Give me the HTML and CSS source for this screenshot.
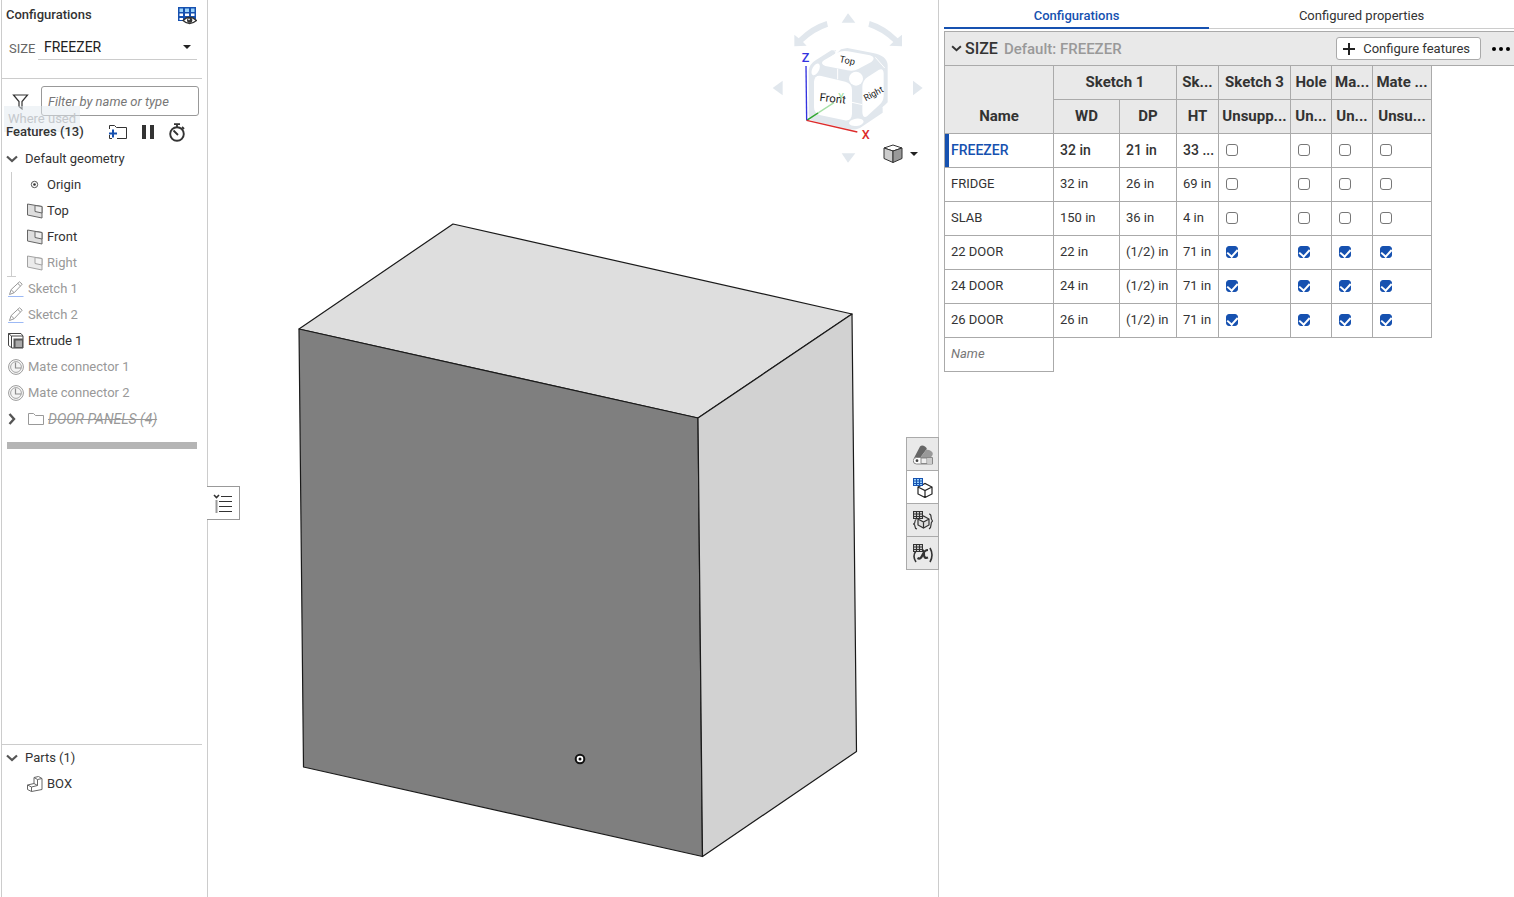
FILE: index.html
```html
<!DOCTYPE html>
<html lang="en">
<head>
<meta charset="UTF-8" />
<meta name="viewport" content="width=device-width, initial-scale=1" />
<title>FREEZER - Part Studio</title>
<link rel="stylesheet" href="styles.css">
</head>
<body>
<svg class="sprite" aria-hidden="true">
  <symbol id="chevron-down" viewBox="0 0 12 8"><path d="M1 1.500l5 4.500 5-4.500" fill="none" stroke="currentColor" stroke-width="2.200"/></symbol>
  <symbol id="chevron-right" viewBox="0 0 8 12"><path d="M1.500 1l4.500 5-4.500 5" fill="none" stroke="currentColor" stroke-width="2.400"/></symbol>
  <symbol id="caret" viewBox="0 0 8 4"><path d="M0 0h8L4 4z" fill="#222"/></symbol>
  <symbol id="plane" viewBox="0 0 16 16"><path d="M.5 1l14.500 2.500v11.500L.5 12z" fill="#dedede" stroke="#666"/><path d="M8 2.500v6l7 1.500V3.500z" fill="#eee" stroke="#666"/></symbol>
  <symbol id="sketch" viewBox="0 0 16 16"><path d="M1.500 13.500l1.700-5L11.500 .8l2.700 2.400-8 8.500z" fill="#fff" stroke="#555"/><path d="M3.200 8.800l2.800 2.800M9.800 2.500l2.700 2.500" stroke="#555"/><path d="M0 15.500h15.500" stroke="#5c8cf0"/></symbol>
  <symbol id="mate" viewBox="0 0 16 16"><circle cx="8" cy="8" r="7.400" fill="#fff" stroke="#555"/><circle cx="8" cy="8" r="5.400" fill="#eee" stroke="#666"/><path d="M7.500 3.500V9H13" fill="none" stroke="#444" stroke-width="1.200"/></symbol>
  <symbol id="grid" viewBox="0 0 10 8"><rect width="10" height="8" fill="#333"/><path d="M1 1h2v1.500H1zM4 1h2v1.500H4zM7 1h2v1.500H7zM1 3.500h2V5H1zM4 3.500h2V5H4zM7 3.500h2V5H7zM1 6h2v1H1zM4 6h2v1H4zM7 6h2v1H7z" fill="#ccc"/></symbol>
</svg>

<div class="app">
  <aside class="sidebar">
    <section class="config">
      <header class="config-head">
        <h2>Configurations</h2>
        <button class="icon-btn" aria-label="Show configuration table">
          <svg width="19" height="18" viewBox="0 0 19 18"><path d="M0 0h18v14H0z" fill="#1651b0"/><path d="M1.500 1.500H5V5H1.500zM7 1.500h4V5H7zM13 1.500h3.500V5H13z" fill="#9bd3fa"/><path d="M1.500 6.500H5V9H1.500zM7 6.500h4V9H7zM13 6.500h3.500V9H13zM1.500 11H5v2H1.500z" fill="#fff"/><path d="M5 13.500q6.500-6.500 13.500 0-7 6-13.500 0z" fill="#fff" stroke="#333" stroke-width="1.300"/><circle cx="11.700" cy="13.200" r="2.600" fill="#333"/><circle cx="11" cy="12.400" r=".8" fill="#fff"/></svg>
        </button>
      </header>
      <div class="config-row">
        <label for="size">SIZE</label>
        <div class="select">
          <select id="size">
            <option>FREEZER</option>
            <option>FRIDGE</option>
            <option>SLAB</option>
            <option>22 DOOR</option>
            <option>24 DOOR</option>
            <option>26 DOOR</option>
          </select>
          <svg width="8" height="4"><use href="#caret"/></svg>
        </div>
      </div>
    </section>

    <section class="features">
      <div class="filter">
        <button class="icon-btn" aria-label="Filter">
          <svg width="17" height="17" viewBox="0 0 17 17"><path d="M1.500 2h14L10 8.500V16l-3-2.500v-5z" fill="none" stroke="#333" stroke-width="1.200"/></svg>
        </button>
        <input type="text" placeholder="Filter by name or type" aria-label="Filter by name or type">
        <span class="tooltip">Where used</span>
      </div>
      <header class="features-head">
        <h2>Features (13)</h2>
        <div class="tools">
          <button class="icon-btn" aria-label="Add folder">
            <svg width="20" height="16" viewBox="0 0 20 16"><path d="M1.500 5V1.500h5l2 2h10v11H9M1.500 11v3.500H4" fill="none" stroke="#333"/><path d="M1 9.500h8M5 5.500v8" stroke="#1651b0" stroke-width="2"/></svg>
          </button>
          <button class="icon-btn" aria-label="Pause">
            <svg width="12" height="14"><path d="M0 0h4v14H0zM8 0h4v14H8z" fill="#333"/></svg>
          </button>
          <button class="icon-btn" aria-label="Regeneration times">
            <svg width="18" height="19" viewBox="0 0 18 19"><circle cx="9" cy="11" r="6.800" fill="none" stroke="#333" stroke-width="1.900"/><path d="M6 1.200h6M9 1v3M14 4l2 2M5.500 7.500L10 12" fill="none" stroke="#333" stroke-width="1.800"/></svg>
          </button>
        </div>
      </header>
      <ul class="tree">
        <li class="row"><svg class="chev" width="12" height="8"><use href="#chevron-down"/></svg>Default geometry</li>
        <li>
          <ul class="group">
            <li class="row"><svg width="16" height="16" viewBox="0 0 16 16"><circle cx="7.500" cy="7.500" r="3.200" fill="none" stroke="#555"/><circle cx="7.500" cy="7.500" r="1.300" fill="#333"/></svg>Origin</li>
            <li class="row"><svg width="16" height="16"><use href="#plane"/></svg>Top</li>
            <li class="row"><svg width="16" height="16"><use href="#plane"/></svg>Front</li>
            <li class="row hidden-item"><svg width="16" height="16"><use href="#plane"/></svg>Right</li>
          </ul>
        </li>
        <li class="row hidden-item"><svg width="16" height="16"><use href="#sketch"/></svg>Sketch 1</li>
        <li class="row hidden-item"><svg width="16" height="16"><use href="#sketch"/></svg>Sketch 2</li>
        <li class="row"><svg width="16" height="16" viewBox="0 0 16 16"><path d="M.5 .5h12.500l2 2.500v12H4L.5 12.500z" fill="#fff" stroke="#444"/><path d="M3.500 15V3H15M.5 .5l3 2.500" fill="none" stroke="#444"/><path d="M5.500 5.500H15V15H5.500z" fill="#555"/><path d="M7.500 7.500H14V14H7.500z" fill="#aaa"/></svg>Extrude 1</li>
        <li class="row hidden-item"><svg width="16" height="16"><use href="#mate"/></svg>Mate connector 1</li>
        <li class="row hidden-item"><svg width="16" height="16"><use href="#mate"/></svg>Mate connector 2</li>
        <li class="row"><svg class="chev" width="12" height="12"><use href="#chevron-right"/></svg><span class="folder"><svg width="16" height="14" viewBox="0 0 16 14"><path d="M.5 1.500h5l2 2h8v9H.5z" fill="none" stroke="#999"/></svg><s>DOOR PANELS (4)</s></span></li>
      </ul>
      <div class="rollback"></div>
    </section>

    <section class="parts">
      <ul class="tree">
        <li class="row"><svg class="chev" width="12" height="8"><use href="#chevron-down"/></svg>Parts (1)</li>
        <li class="row part"><svg width="16" height="16" viewBox="0 0 16 16"><path d="M.5 9L7 7.500v-6L11.500 .5l3.500 2v11L4.500 15.500l-4-2z" fill="#fff" stroke="#666"/><path d="M.5 9l4 2v4.500M4.500 11l6-1.500V3.500l4.500-1M10.500 3.500L7 1.500M10.500 9.500L7 7.500" fill="none" stroke="#666"/></svg>BOX</li>
      </ul>
    </section>
  </aside>

  <main class="viewport">
    <svg class="model" viewBox="208 0 730 897" role="img" aria-label="Freezer box model">
      <g stroke="#1a1a1a" stroke-width="1.200" stroke-linejoin="round">
        <path d="M453 224l399 90-154 104-399-89z" fill="#dedede"/>
        <path d="M299 329l399 89 4.500 438.500L303.500 767z" fill="#7f7f7f"/>
        <path d="M698 418l154-104 4.500 437.500-154 105z" fill="#d2d2d2"/>
      </g>
      <circle cx="580" cy="759" r="4.300" fill="#fff" stroke="#111" stroke-width="2"/>
      <circle cx="580" cy="759" r="1.500" fill="#111"/>
    </svg>

    <button class="list-toggle" aria-label="Toggle feature list">
      <svg width="20" height="20" viewBox="0 0 20 20"><path d="M1 1l2.500 2.500L6 1" fill="none" stroke="#333" stroke-width="1.600"/><path d="M3.500 6v13" stroke="#999" stroke-width="2"/><path d="M8 2.500h11M6 7.500h13M6 12.500h13M6 17.500h13" stroke="#333"/></svg>
    </button>

    <svg class="view-cube" viewBox="0 0 534 525" role="img" aria-label="View cube">
      <g fill="#e1e7ed">
        <path d="M245 68l19-28 22 28zM245 460h41l-22 28zM38 264l30-22v44zM488 264l-29-22v44z"/>
        <path d="M103 104l13 11q38-38 84-52l4 17q-42 14-75 46l11 11-37 2zM426 104l-13 11q-38-38-84-52l-4 17q42 14 75 46l-12 11 38 2z"/>
        <path d="M146 214q1-22 22-34l46-29 14 0-3 10-30 22 3 10 45-45 19-4 77 15q42 8 44 36v112l-15 15v16l-68 46q-20 8-38 2l-102-23q-14-4-14-22z"/>
      </g>
      <g fill="#fff">
        <path d="M192 181l38-22q14-8 34-5l66 12q20 7 4 20l-38 20q-14 9-34 5l-66-13q-18-7-4-17z"/>
        <path d="M162 245q2-21 22-17l72 17q20 5 20 25v72q-2 23-22 19l-72-15q-20-5-20-25z"/>
        <path d="M307 260q1-19 16-29l34-22q13-6 14 11v68q-1 18-14 28l-36 33q-13 7-14-13z"/>
        <circle cx="288" cy="236" r="21"/>
        <ellipse cx="167" cy="208" rx="10" ry="19" transform="rotate(28 167 208)"/>
        <ellipse cx="289" cy="367" rx="22" ry="11" transform="rotate(-8 289 367)"/>
      </g>
      <path d="M233 206v32M276 307l31 7M346 172l28 32M222 151l8 8M368 322l16-9" stroke="#fff" stroke-width="3"/>
      <g fill="none" stroke-width="4">
        <path d="M140 361l82-53" stroke="#a5dfa5"/>
        <path d="M140 361l34-22" stroke="#2fa52f"/>
        <path d="M138 198l2 163" stroke="#3333e0"/>
        <path d="M140 361l152 35" stroke="#dd2b2b"/>
      </g>
      <g class="cube-label">
        <text x="262" y="191" font-size="28" transform="rotate(12 262 181)">Top</text>
        <text x="218" y="307" font-size="34" transform="rotate(6 218 296)">Front</text>
        <text x="340" y="290" font-size="27" transform="rotate(-28 340 280)">Right</text>
      </g>
      <g class="axis-label">
        <text x="137" y="186" fill="#3333e0">Z</text>
        <text x="317" y="416" fill="#dd2b2b">X</text>
        <text class="axis-y" x="243" y="300" fill="#a5dfa5">Y</text>
      </g>
    </svg>

    <button class="shading" aria-label="View options">
      <svg width="20" height="20" viewBox="0 0 20 20" stroke="#333" stroke-linejoin="round"><path d="M1 4l9-3 9 3-9 3z" fill="#fff"/><path d="M1 4l9 3v11.500l-9-4z" fill="#ccc"/><path d="M19 4l-9 3v11.500l9-4z" fill="#999"/></svg>
      <svg width="8" height="4"><use href="#caret"/></svg>
    </button>

    <nav class="side-tabs">
      <button aria-label="Appearances">
        <svg width="20" height="20" viewBox="0 0 20 20"><path d="M1 13L7 1.500Q9-.5 12 1.500T13 5L7 13z" fill="#666"/><path d="M7 13l6-8q2-1 5 1t1 5l-3 3z" fill="#999"/><path d="M3.500 12.500h16v6.500h-16a3.200 3.200 0 0 1 0-6.500z" fill="#fff" stroke="#888"/><path d="M8 13h6v5.500H8z" fill="#eee" stroke="#888"/><path d="M14.500 13H19v5.500h-4.500z" fill="#ccc"/><circle cx="4" cy="15.700" r="1.400" fill="#444"/></svg>
      </button>
      <button class="active" aria-label="Configurations">
        <svg width="20" height="20" viewBox="0 0 20 20"><path d="M5 9l7-3.500 7 3.500v7l-7 3.500L5 16zM5 9l7 3.500L19 9M12 12.500v7" fill="#fff" stroke="#222" stroke-width="1.200"/><path d="M0 0h10v8H0z" fill="#1651b0"/><path d="M1 1h2v1.500H1zM4 1h2v1.500H4zM7 1h2v1.500H7zM1 3.500h2V5H1zM4 3.500h2V5H4zM7 3.500h2V5H7zM1 6h2v1H1zM4 6h2v1H4zM7 6h2v1H7z" fill="#9bd3fa"/></svg>
      </button>
      <button aria-label="Custom tables">
        <svg width="20" height="20" viewBox="0 0 20 20"><path d="M5 8l5.500-3L16 8v6l-5.500 3L5 14zM5 8l5.500 3L16 8M10.500 11v6" fill="#ddd" stroke="#333" stroke-width="1.200"/><path d="M3.500 8.500q-1.500 0-1.500 2t-1.500 2.500q1.500.5 1.500 2.500t2 2.500M16 3q2 0 2 2.500t1.500 4.500q-1.500 1-1.500 4t-2 4" fill="none" stroke="#333" stroke-width="1.200"/><use href="#grid" width="10" height="8"/></svg>
      </button>
      <button aria-label="Variables">
        <svg width="20" height="20" viewBox="0 0 20 20"><path d="M3 7q-4 5 0 11M17 4q4 7 0 14" fill="none" stroke="#333" stroke-width="1.600"/><path d="M4.500 14q3 2 5-3t5.500-5M9 6q2 0 2 4.500t4 3" fill="none" stroke="#333" stroke-width="2.200"/><use href="#grid" width="10" height="8"/></svg>
      </button>
    </nav>
  </main>

  <section class="panel">
    <nav class="tabs">
      <button class="tab active">Configurations</button>
      <button class="tab">Configured properties</button>
    </nav>
    <header class="panel-head">
      <svg width="11" height="7"><use href="#chevron-down"/></svg>
      <h3>SIZE</h3>
      <span class="default">Default: FREEZER</span>
      <button class="configure"><svg width="12" height="12"><path d="M6 0v12M0 6h12" stroke="#222" stroke-width="2"/></svg>Configure features</button>
      <button class="icon-btn more" aria-label="More"><svg width="18" height="4"><circle cx="2" cy="2" r="2"/><circle cx="9" cy="2" r="2"/><circle cx="16" cy="2" r="2"/></svg></button>
    </header>
    <table class="grid">
      <colgroup>
        <col class="c-name"><col class="c-wd"><col class="c-dp"><col class="c-ht"><col class="c-sk"><col class="c-flag"><col class="c-flag"><col class="c-mate">
      </colgroup>
      <thead>
        <tr><th rowspan="2" class="name">Name</th><th colspan="2">Sketch 1</th><th>Sk...</th><th>Sketch 3</th><th>Hole</th><th>Ma...</th><th>Mate ...</th></tr>
        <tr><th>WD</th><th>DP</th><th>HT</th><th>Unsupp...</th><th>Un...</th><th>Un...</th><th>Unsu...</th></tr>
      </thead>
      <tbody>
        <tr class="current"><td>FREEZER</td><td>32 in</td><td>21 in</td><td>33 ...</td><td><input type="checkbox" aria-label="FREEZER Sketch 3"></td><td><input type="checkbox" aria-label="FREEZER Hole"></td><td><input type="checkbox" aria-label="FREEZER Mate connector 1"></td><td><input type="checkbox" aria-label="FREEZER Mate connector 2"></td></tr>
        <tr><td>FRIDGE</td><td>32 in</td><td>26 in</td><td>69 in</td><td><input type="checkbox" aria-label="FRIDGE Sketch 3"></td><td><input type="checkbox" aria-label="FRIDGE Hole"></td><td><input type="checkbox" aria-label="FRIDGE Mate connector 1"></td><td><input type="checkbox" aria-label="FRIDGE Mate connector 2"></td></tr>
        <tr><td>SLAB</td><td>150 in</td><td>36 in</td><td>4 in</td><td><input type="checkbox" aria-label="SLAB Sketch 3"></td><td><input type="checkbox" aria-label="SLAB Hole"></td><td><input type="checkbox" aria-label="SLAB Mate connector 1"></td><td><input type="checkbox" aria-label="SLAB Mate connector 2"></td></tr>
        <tr><td>22 DOOR</td><td>22 in</td><td>(1/2) in</td><td>71 in</td><td><input type="checkbox" checked aria-label="22 DOOR Sketch 3"></td><td><input type="checkbox" checked aria-label="22 DOOR Hole"></td><td><input type="checkbox" checked aria-label="22 DOOR Mate connector 1"></td><td><input type="checkbox" checked aria-label="22 DOOR Mate connector 2"></td></tr>
        <tr><td>24 DOOR</td><td>24 in</td><td>(1/2) in</td><td>71 in</td><td><input type="checkbox" checked aria-label="24 DOOR Sketch 3"></td><td><input type="checkbox" checked aria-label="24 DOOR Hole"></td><td><input type="checkbox" checked aria-label="24 DOOR Mate connector 1"></td><td><input type="checkbox" checked aria-label="24 DOOR Mate connector 2"></td></tr>
        <tr><td>26 DOOR</td><td>26 in</td><td>(1/2) in</td><td>71 in</td><td><input type="checkbox" checked aria-label="26 DOOR Sketch 3"></td><td><input type="checkbox" checked aria-label="26 DOOR Hole"></td><td><input type="checkbox" checked aria-label="26 DOOR Mate connector 1"></td><td><input type="checkbox" checked aria-label="26 DOOR Mate connector 2"></td></tr>
        <tr><td><input class="new-name" type="text" placeholder="Name" aria-label="Name"></td></tr>
      </tbody>
    </table>
  </section>
</div>
</body>
</html>
```
FILE: styles.css
```css
* {
  box-sizing: border-box;
}
body {
  margin: 0;
  font-family: Roboto, "Liberation Sans", sans-serif;
  font-size: 13px;
  line-height: 18px;
  color: #333;
  background: #fff;
}
h2, h3, ul {
  margin: 0;
  padding: 0;
  list-style: none;
}
h2 {
  font-size: 13px;
  font-weight: 500;
}
button, input, select {
  font: inherit;
  color: inherit;
}
button {
  padding: 0;
  border: none;
  background: none;
  cursor: pointer;
}
svg {
  display: block;
  flex: none;
}
.sprite {
  position: absolute;
  width: 0;
  height: 0;
}
.icon-btn {
  display: flex;
}
.app {
  display: flex;
  height: 100vh;
}

/* left panel */
.sidebar {
  display: flex;
  flex-direction: column;
  flex: none;
  width: 207px;
  margin-left: 1px;
  padding-right: 5px;
  border-left: 1px solid #ccc;
  border-right: 1px solid #ccc;
}
.config {
  padding: 0 5px 18px 4px;
  border-bottom: 1px solid #ccc;
}
.config-head {
  display: flex;
  align-items: center;
  justify-content: space-between;
  height: 31px;
}
.config-head h2 {
  padding-bottom: 2px;
}
.config-row {
  display: flex;
  align-items: center;
  gap: 5px;
  padding-left: 3px;
  color: #666;
}
.config-row label {
  width: 24px;
  padding-top: 6px;
}
.select {
  display: flex;
  flex: 1;
  align-items: center;
  height: 29px;
  padding: 4px 6px 0 0;
  border-bottom: 1px solid #ccc;
}
.select select {
  flex: 1;
  padding: 0 0 0 6px;
  border: none;
  background: none;
  color: #222;
  font-size: 14px;
  appearance: none;
}
.features {
  flex: 1;
  padding: 7px 3px 0 4px;
}
.filter {
  position: relative;
  display: flex;
  align-items: center;
  justify-content: space-between;
  padding-left: 6px;
}
.filter input {
  width: 158px;
  height: 30px;
  padding: 0 6px;
  border: 1px solid #999;
  border-radius: 3px;
}
.filter input::placeholder,
.new-name::placeholder {
  color: #777;
  font-style: italic;
}
.tooltip {
  position: absolute;
  left: -2px;
  top: 20px;
  padding: 4px;
  background: rgba(225, 233, 240, 0.5);
  color: #c4c8cc;
}
.features-head {
  position: relative;
  display: flex;
  align-items: center;
  justify-content: space-between;
  height: 30px;
  padding-top: 2px;
}
.tools {
  display: flex;
  align-items: center;
  gap: 14px;
  padding-right: 13px;
}
.row {
  display: flex;
  align-items: center;
  gap: 4px;
  height: 26px;
  padding-left: 2px;
}
.row .chev {
  margin-left: -2px;
  margin-right: 3px;
  color: #555;
}
.group {
  position: relative;
  padding-left: 19px;
}
.group::before {
  content: "";
  position: absolute;
  left: 1px;
  top: 0;
  width: 9px;
  height: 104px;
  border-bottom: 1px solid #ccc;
  background: linear-gradient(#ccc, #ccc) 4px 0 / 1px 100% no-repeat;
}
.hidden-item {
  color: #999;
}
.hidden-item svg {
  opacity: 0.6;
}
.folder {
  display: flex;
  align-items: center;
  gap: 4px;
  padding-left: 3px;
  font-size: 14px;
  font-style: italic;
  color: #999;
}
.rollback {
  height: 7px;
  margin: 10px 2px 0 1px;
  background: #b5b5b5;
}
.parts {
  height: 153px;
  padding-left: 4px;
  border-top: 1px solid #ccc;
}
.part {
  padding-left: 21px;
}

/* 3D view */
.viewport {
  position: relative;
  flex: 1;
  min-width: 0;
}
.model {
  width: 100%;
  height: 100%;
}
.list-toggle {
  position: absolute;
  left: -1px;
  top: 486px;
  display: flex;
  align-items: center;
  justify-content: center;
  width: 33px;
  height: 34px;
  padding-top: 2px;
  border: 1px solid #999;
  border-left: none;
  background: #fff;
}
.view-cube {
  position: absolute;
  top: 0;
  right: 0;
  width: 178px;
  height: 175px;
}
.cube-label {
  fill: #222;
  text-anchor: middle;
}
.axis-label {
  font-size: 38px;
  font-weight: 500;
  text-anchor: middle;
}
.axis-y {
  font-size: 28px;
}
.shading {
  position: absolute;
  right: 20px;
  top: 144px;
  display: flex;
  align-items: center;
  gap: 7px;
}
.side-tabs {
  position: absolute;
  right: -1px;
  top: 437px;
  border: 1px solid #aaa;
}
.side-tabs button {
  display: flex;
  align-items: center;
  justify-content: center;
  width: 31px;
  height: 33px;
  padding-top: 2px;
  border-bottom: 1px solid #aaa;
  background: #e9e9e9;
}
.side-tabs button:last-child {
  height: 32px;
  border-bottom: none;
}
.side-tabs .active {
  background: #fff;
}

/* configuration table */
.panel {
  flex: none;
  width: 576px;
  padding-left: 5px;
  border-left: 1px solid #ccc;
}
.tabs {
  display: flex;
  height: 29px;
  margin-bottom: 2px;
}
.tab {
  flex: 1 1 auto;
  padding-top: 4px;
  border-bottom: 1px solid #ccc;
}
.tab.active {
  border-bottom: 2px solid #1651b0;
  color: #1651b0;
  font-weight: 500;
}
.panel-head {
  display: flex;
  align-items: center;
  height: 35px;
  padding: 0 4px 0 6px;
  border: 1px solid #aaa;
  border-right: none;
  background: #e9e9e9;
}
.panel-head h3 {
  margin: 0 6px 0 3px;
  font-size: 16px;
  font-weight: 500;
}
.default {
  color: #999;
  font-size: 15px;
  font-weight: 500;
}
.configure {
  display: flex;
  align-items: center;
  gap: 8px;
  height: 23px;
  margin-left: auto;
  padding: 0 10px 0 6px;
  border: 1px solid #aaa;
  border-radius: 3px;
  background: #fff;
}
.more {
  margin-left: 11px;
}
.grid {
  width: 488px;
  margin-top: -1px;
  table-layout: fixed;
  border-collapse: collapse;
}
.c-name { width: 109px; }
.c-wd { width: 66px; }
.c-dp { width: 57px; }
.c-ht { width: 42px; }
.c-sk { width: 72px; }
.c-flag { width: 41px; }
.c-mate { width: 59px; }
.grid th, .grid td {
  height: 34px;
  padding: 0 3px 2px;
  border: 1px solid #aaa;
  white-space: nowrap;
}
.grid th {
  background: #e9e9e9;
  font-size: 15px;
  font-weight: 700;
}
.grid .name {
  padding-bottom: 8px;
  vertical-align: bottom;
}
.grid td {
  padding-left: 6px;
  text-align: left;
}
.current td {
  font-size: 14px;
  font-weight: 500;
}
.current td:first-child {
  box-shadow: inset 4px 0 #1651b0;
  color: #1651b0;
}
.grid input[type=checkbox] {
  display: flex;
  justify-content: center;
  width: 12px;
  height: 12px;
  margin: 0 0 0 1px;
  border: 1px solid #777;
  border-radius: 3px;
  background: #fff;
  appearance: none;
}
.grid input[type=checkbox]:checked {
  border-color: #1651b0;
  background: #1651b0;
}
.grid input[type=checkbox]:checked::after {
  content: "";
  width: 5px;
  height: 8px;
  border: solid #fff;
  border-width: 0 2px 2px 0;
  transform: rotate(42deg);
}
.new-name {
  width: 100%;
  padding: 0;
  border: none;
  background: none;
  outline: none;
}
```
